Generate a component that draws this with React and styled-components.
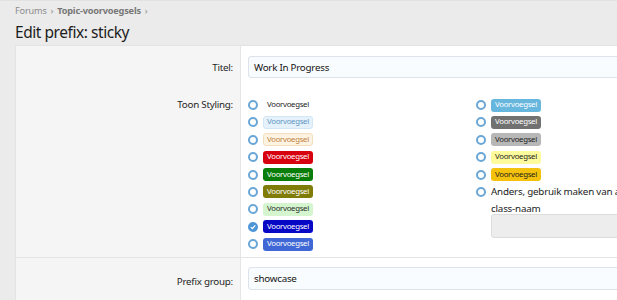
import React from "react";
import styled, { createGlobalStyle } from "styled-components";

const Global = createGlobalStyle`
  html, body {
    margin: 0;
    padding: 0;
    background: #ebebeb;
    overflow: hidden;
  }
  body {
    font-family: "Noto Sans", "Open Sans", sans-serif;
    color: #141414;
  }
`;

const Page = styled.div`
  width: 617px;
  height: 300px;
  overflow: hidden;
  border-top: 1px solid #e2e2e2;
  box-sizing: border-box;
`;

const Header = styled.div`
  padding: 2px 15px 0;
  height: 44px;
  box-sizing: border-box;
`;

const Crumbs = styled.div`
  display: flex;
  align-items: center;
  gap: 4px;
  font-size: 9.2px;
  letter-spacing: -0.2px;
  color: #8c8c8c;
  height: 14px;
`;

const Crumb = styled.span`
  font-weight: ${({ $strong }) => ($strong ? 700 : 400)};
  color: ${({ $strong }) => ($strong ? "#777" : "#8c8c8c")};
`;

const Title = styled.h1`
  margin: 3px 0 0;
  font-size: 15.5px;
  letter-spacing: -0.45px;
  font-weight: 400;
  color: #1d1d1d;
  line-height: 24px;
`;

const Panel = styled.div`
  width: 760px;
  margin-left: 15px;
  background: #fff;
  border: 1px solid #e3e3e3;
  border-right: none;
`;

const Row = styled.div`
  display: grid;
  grid-template-columns: 225px 1fr;
  border-top: ${({ $sep }) => ($sep ? "1px solid #e4e4e4" : "none")};
`;

const Label = styled.div`
  background: #f5f5f5;
  border-right: 1px solid #e6e6e6;
  text-align: right;
  padding: ${({ $pt }) => $pt}px 7px 0 0;
  font-size: 9.8px;
  letter-spacing: -0.25px;
  color: #1f1f1f;
`;

const Cell = styled.div`
  padding: ${({ $pad }) => $pad};
`;

const Input = styled.div`
  height: ${({ $h }) => $h || 22}px;
  box-sizing: border-box;
  border: 1px solid #dde3ea;
  border-radius: 3px;
  background: #f9fcfe;
  display: flex;
  align-items: center;
  padding-left: 5px;
  font-size: 9.8px;
  letter-spacing: -0.25px;
  color: #141414;
`;

const Choices = styled.div`
  display: grid;
  grid-template-columns: 228px 1fr;
`;

const List = styled.div`
  display: flex;
  flex-direction: column;
  gap: 3.4px;
`;

const Option = styled.div`
  display: flex;
  align-items: ${({ $top }) => ($top ? "flex-start" : "center")};
  gap: 5px;
  min-height: 14px;
`;

const Radio = styled.span`
  width: 10px;
  height: 10px;
  margin-top: ${({ $top }) => ($top ? 2 : 0)}px;
  border-radius: 50%;
  box-sizing: border-box;
  border: 2px solid #6aa7d6;
  flex: none;
  display: flex;
  align-items: center;
  justify-content: center;
  background: ${({ $on }) => ($on ? "#4d95d6" : "#fff")};
  border-color: ${({ $on }) => ($on ? "#4d95d6" : "#6aa7d6")};
`;

const Pill = styled.span`
  display: inline-flex;
  align-items: center;
  height: 13px;
  padding: 0 3px;
  border-radius: 3px;
  font-size: 7.8px;
  letter-spacing: -0.3px;
  line-height: 1;
  box-sizing: border-box;
  background: ${({ $bg }) => $bg};
  color: ${({ $fg }) => $fg};
  border: 1px solid ${({ $bd }) => $bd || "transparent"};
`;

const Other = styled.div`
  display: flex;
  flex-direction: column;
  flex: 1;
`;

const OtherText = styled.div`
  font-size: 9.8px;
  letter-spacing: -0.2px;
  color: #222;
  line-height: 17px;
  margin-top: -1.5px;
  white-space: nowrap;
`;

const OtherInput = styled.div`
  margin-top: -3px;
  height: 22px;
  border: 1px solid #dcdcdc;
  border-radius: 3px;
  background: #ededed;
`;

const left = [
  { bg: "transparent", fg: "#222" },
  { bg: "#e5f2fb", fg: "#5f95c2", bd: "#d3e6f4" },
  { bg: "#fdf3e2", fg: "#c0823e", bd: "#f3dfbd" },
  { bg: "#d7000f", fg: "#fff" },
  { bg: "#087d08", fg: "#fff" },
  { bg: "#7f7c08", fg: "#fff" },
  { bg: "#d4f5ce", fg: "#2b2b2b" },
  { bg: "#0707c6", fg: "#fff", on: true },
  { bg: "#3f68d6", fg: "#fff" },
];

const right = [
  { bg: "#67b6dd", fg: "#fff" },
  { bg: "#717171", fg: "#fff" },
  { bg: "#b7b7b7", fg: "#1e1e1e" },
  { bg: "#fdfb9c", fg: "#1e1e1e" },
  { bg: "#f4c20d", fg: "#1e1e1e" },
];

const Check = () => (
  <svg width="6" height="6" viewBox="0 0 6 6">
    <path d="M0.8 3.1 L2.4 4.6 L5.2 1.4" fill="none" stroke="#fff" strokeWidth="1.3" />
  </svg>
);

const Choice = ({ bg, fg, bd, on }) => (
  <Option>
    <Radio $on={on}>{on && <Check />}</Radio>
    <Pill $bg={bg} $fg={fg} $bd={bd}>Voorvoegsel</Pill>
  </Option>
);

export default function App() {
  return (
    <Page>
      <Global />
      <Header>
        <Crumbs>
          <Crumb>Forums</Crumb>
          <span>›</span>
          <Crumb $strong>Topic-voorvoegsels</Crumb>
          <span>›</span>
        </Crumbs>
        <Title>Edit prefix: sticky</Title>
      </Header>
      <Panel>
        <Row>
          <Label $pt={15}>Titel:</Label>
          <Cell $pad="10px 0 0 7px">
            <Input>Work In Progress</Input>
          </Cell>
        </Row>
        <Row>
          <Label $pt={20}>Toon Styling:</Label>
          <Cell $pad="20px 0 6px 7px">
            <Choices>
              <List>
                {left.map((c, i) => (
                  <Choice key={i} {...c} />
                ))}
              </List>
              <List>
                {right.map((c, i) => (
                  <Choice key={i} {...c} />
                ))}
                <Option $top>
                  <Radio $top />
                  <Other>
                    <OtherText>
                      Anders, gebruik maken van aangepaste
                      <br />
                      class-naam
                    </OtherText>
                    <OtherInput />
                  </Other>
                </Option>
              </List>
            </Choices>
          </Cell>
        </Row>
        <Row $sep>
          <Label $pt={17}>Prefix group:</Label>
          <Cell $pad="9px 0 10px 7px">
            <Input $h={23}>showcase</Input>
          </Cell>
        </Row>
      </Panel>
    </Page>
  );
}
